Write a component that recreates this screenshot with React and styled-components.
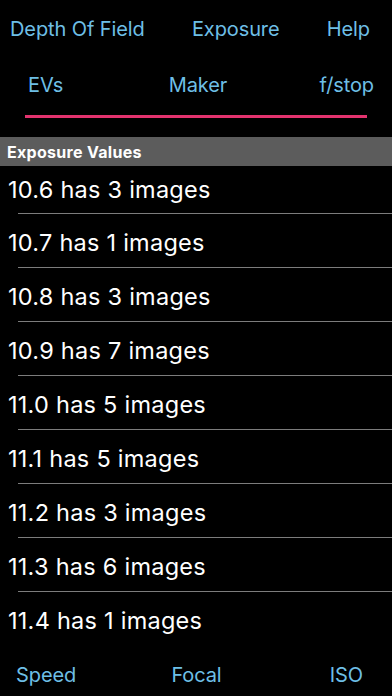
import React from 'react';
import styled, { createGlobalStyle } from 'styled-components';

const GlobalStyle = createGlobalStyle`
    html, body {
        margin: 0;
        padding: 0;
        background: #000;
    }
    body {
        font-family: Inter, "Liberation Sans", Arial, sans-serif;
        -webkit-font-smoothing: antialiased;
    }
`;

const Screen = styled.div`
    width: 392px;
    height: 696px;
    background: #000;
    display: flex;
    flex-direction: column;
    overflow: hidden;
`;

const TopNav = styled.div`
    height: 58px;
    display: flex;
    align-items: center;
    justify-content: space-between;
    padding: 0 22px 0 10px;
`;

const NavLink = styled.span`
    color: #6ebfe6;
    font-size: 20px;
    letter-spacing: -0.1px;
`;

const Tabs = styled.div`
    height: 54px;
    display: grid;
    grid-template-columns: 1fr auto 1fr;
    align-items: center;
    padding: 0 18px 0 28px;
`;

const Tab = styled(NavLink)`
    justify-self: ${props => props.align};
    margin-left: ${props => props.shift || 0}px;
`;

const Underline = styled.div`
    height: 3px;
    margin: 3px 25px 19px;
    background: #e2336e;
`;

const SectionHeader = styled.div`
    height: 29px;
    background: #5c5c5c;
    color: #fff;
    font-weight: 700;
    font-size: 16px;
    letter-spacing: 0.3px;
    display: flex;
    align-items: center;
    padding-left: 7px;
`;

const List = styled.div`
    flex: 1;
    display: flex;
    flex-direction: column;
`;

const Row = styled.div`
    height: ${props => (props.first ? 47 : 53)}px;
    display: flex;
    align-items: center;
    padding: ${props => (props.first ? '0' : '3px')} 0 0 8px;
    box-sizing: border-box;
    position: relative;
    color: #fff;
    font-size: 23.5px;
    letter-spacing: 0.25px;
    flex-shrink: 0;
    ${props => !props.last && `
        &::after {
            content: '';
            position: absolute;
            left: 18px;
            right: 0;
            bottom: -1px;
            height: 1px;
            background: #7c7c7c;
        }
        margin-bottom: 1px;
    `}
`;

const BottomBar = styled.div`
    height: 51px;
    display: grid;
    grid-template-columns: 1fr auto 1fr;
    align-items: center;
    padding: 8px 29px 0 16px;
    box-sizing: border-box;
`;

const rows = [
    ['10.6', 3],
    ['10.7', 1],
    ['10.8', 3],
    ['10.9', 7],
    ['11.0', 5],
    ['11.1', 5],
    ['11.2', 3],
    ['11.3', 6],
    ['11.4', 1],
];

function App() {
    return (
        <Screen>
            <GlobalStyle />
            <TopNav>
                <NavLink>Depth Of Field</NavLink>
                <NavLink>Exposure</NavLink>
                <NavLink>Help</NavLink>
            </TopNav>
            <Tabs>
                <Tab align="start">EVs</Tab>
                <Tab align="center" shift={-6}>Maker</Tab>
                <Tab align="end">f/stop</Tab>
            </Tabs>
            <Underline />
            <SectionHeader>Exposure Values</SectionHeader>
            <List>
                {rows.map(([ev, count], index) => (
                    <Row key={ev} first={index === 0} last={index === rows.length - 1}>
                        {ev} has {count} images
                    </Row>
                ))}
            </List>
            <BottomBar>
                <Tab align="start">Speed</Tab>
                <Tab align="center" shift={14}>Focal</Tab>
                <Tab align="end">ISO</Tab>
            </BottomBar>
        </Screen>
    );
}

export default App;
